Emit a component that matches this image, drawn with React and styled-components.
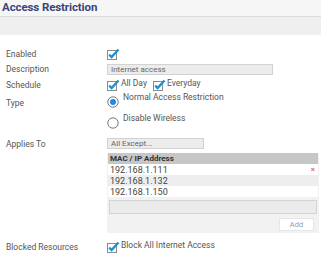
import React from "react";
import styled, { createGlobalStyle } from "styled-components";

const GlobalStyle = createGlobalStyle`
  body {
    margin: 0;
    background: #fff;
    font-family: Roboto, "Liberation Sans", sans-serif;
  }
`;

const Page = styled.div`
  width: 321px;
  height: 261px;
  overflow: hidden;
  background: #fff;
  color: #555;
  font-size: 8.5px;
`;

const Title = styled.div`
  height: 16px;
  padding-left: 2px;
  background: #f6f6f6;
  border-bottom: 1px solid #dcdcdc;
  color: #39457a;
  font-weight: 700;
  font-size: 11.5px;
  line-height: 15px;
  letter-spacing: -0.1px;
`;

const Band = styled.div`
  height: 18px;
  background: #efefef;
`;

const Form = styled.div`
  padding: 11px 0 0 6px;
`;

const Row = styled.div`
  display: flex;
  align-items: ${(p) => (p.top ? "flex-start" : "center")};
  height: ${(p) => p.h}px;
`;

const Label = styled.div`
  width: 101px;
  flex-shrink: 0;
  color: #555;
`;

const Field = styled.div`
  display: flex;
  align-items: center;
  gap: ${(p) => p.gap || 0}px;
`;

const TextBox = styled.div`
  width: ${(p) => p.w}px;
  height: 11px;
  box-sizing: border-box;
  border: 1px solid #d2d2d2;
  background: #ececec;
  color: #666;
  padding-left: 3px;
  line-height: 9px;
  font-size: 8px;
`;

const Opt = styled.span`
  display: flex;
  align-items: flex-start;
  gap: 1px;
  height: 13px;
  color: #555;
  line-height: 9px;
`;

const RadioLine = styled.div`
  display: flex;
  align-items: flex-start;
  gap: 4px;
  color: #555;
  line-height: 9px;
`;

const Box = styled.div`
  width: 212px;
  height: 80px;
  background: #f2f2f2;
  margin-left: 101px;
  display: flex;
  flex-direction: column;
`;

const HeadCell = styled.div`
  height: 11px;
  background: #c6c6c6;
  font-weight: 700;
  font-size: 8px;
  color: #333;
  line-height: 11px;
  padding-left: 2px;
  margin: 0 1px;
`;

const Cell = styled.div`
  display: flex;
  justify-content: space-between;
  align-items: center;
  height: 11px;
  padding: 0 3px 0 2px;
  margin: 0 1px;
  background: ${(p) => (p.odd ? "#eeeeee" : "#ffffff")};
  color: #444;
  font-size: 9px;
`;

const NewEntry = styled.div`
  margin: 3px 2px 0 2px;
  height: 12px;
  border: 1px solid #d4d4d4;
  background: #ebebeb;
`;

const Actions = styled.div`
  display: flex;
  justify-content: flex-end;
  padding: 4px 5px 0 0;
`;

const AddButton = styled.div`
  width: 33px;
  height: 11px;
  background: #fff;
  border: 1px solid #e6e6e6;
  color: #999;
  font-size: 7.5px;
  text-align: center;
  line-height: 11px;
`;

const Remove = styled.span`
  color: #e36a6a;
  font-size: 8px;
  font-weight: 700;
`;

const Check = () => (
  <svg width="13" height="12" viewBox="0 0 13 12">
    <rect x="0.5" y="2.5" width="9" height="9" fill="#fff" stroke="#8a8a8a" />
    <path d="M2.2 6.6 L4.6 9 L11.5 1.5" fill="none" stroke="#1b8fd6" strokeWidth="2.3" />
  </svg>
);

const Radio = ({ on }) => (
  <svg width="12" height="12" viewBox="0 0 12 12" style={{ marginTop: 3 }}>
    <circle cx="6" cy="6" r="5.2" fill="#fff" stroke="#6a6a6a" strokeWidth="0.9" />
    {on && <circle cx="6" cy="6" r="3" fill="#1e88e5" />}
  </svg>
);

const rows = ["192.168.1.111", "192.168.1.132", "192.168.1.150"];

export default function App() {
  return (
    <Page>
      <GlobalStyle />
      <Title>Access Restriction</Title>
      <Band />
      <Form>
        <Row h={15}>
          <Label>Enabled</Label>
          <Check />
        </Row>
        <Row h={16}>
          <Label>Description</Label>
          <TextBox w={166}>Internet access</TextBox>
        </Row>
        <Row h={16}>
          <Label>Schedule</Label>
          <Field gap={6}>
            <Opt><Check />All Day</Opt>
            <Opt><Check />Everyday</Opt>
          </Field>
        </Row>
        <Row h={19} top>
          <Label style={{ marginTop: 5 }}>Type</Label>
          <RadioLine><Radio on />Normal Access Restriction</RadioLine>
        </Row>
        <Row h={22} top>
          <Label />
          <RadioLine style={{ marginTop: 2 }}><Radio />Disable Wireless</RadioLine>
        </Row>
        <Row h={19}>
          <Label>Applies To</Label>
          <TextBox w={97}>All Except...</TextBox>
        </Row>
        <Box>
          <HeadCell>MAC / IP Address</HeadCell>
          {rows.map((ip, i) => (
            <Cell key={ip} odd={i % 2 === 1}>
              {ip}
              {i === 0 && <Remove>×</Remove>}
            </Cell>
          ))}
          <NewEntry />
          <Actions>
            <AddButton>Add</AddButton>
          </Actions>
        </Box>
        <Row h={28}>
          <Label>Blocked Resources</Label>
          <Opt><Check />Block All Internet Access</Opt>
        </Row>
      </Form>
    </Page>
  );
}
